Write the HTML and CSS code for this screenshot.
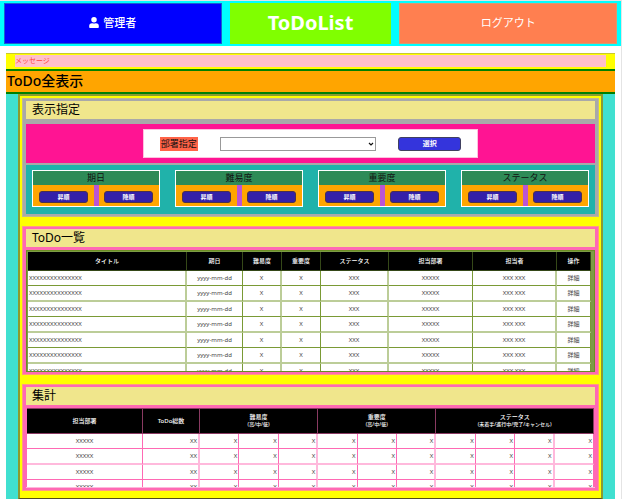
FILE: index.html
```html
<!DOCTYPE html>
<html lang="ja">
<head>
<meta charset="utf-8">
<title>ToDoList</title>
<link rel="stylesheet" href="styles.css">
</head>
<body>
<header class="top">
  <div class="top-cell user">
    <svg class="user-icon" viewBox="0 0 448 512" aria-hidden="true"><path d="M224 256a128 128 0 1 0 0-256 128 128 0 0 0 0 256zm90 32h-17a174 174 0 0 1-146 0h-17A134 134 0 0 0 0 422v42c0 27 21 48 48 48h352c27 0 48-21 48-48v-42a134 134 0 0 0-134-134z"/></svg>
    <span>管理者</span>
  </div>
  <h1 class="top-cell brand">ToDoList</h1>
  <a class="top-cell logout" href="#">ログアウト</a>
</header>
<main class="page">
  <div class="message"><p>メッセージ</p></div>
  <h2 class="page-title">ToDo全表示</h2>
  <div class="body">
    <div class="column">
      <section class="panel filter">
        <h3 class="panel-title">表示指定</h3>
        <div class="dept">
          <form class="dept-form">
            <label for="dept">部署指定</label>
            <div class="select">
              <select id="dept"><option></option></select>
              <svg viewBox="0 0 6 4" aria-hidden="true"><path d="M1 1l2 2 2-2"/></svg>
            </div>
            <button type="button" class="pick">選択</button>
          </form>
        </div>
        <div class="sorts">
          <div class="sort"><h4>期日</h4><div class="sort-buttons"><button type="button">昇順</button><i></i><button type="button">降順</button></div></div>
          <div class="sort"><h4>難易度</h4><div class="sort-buttons"><button type="button">昇順</button><i></i><button type="button">降順</button></div></div>
          <div class="sort"><h4>重要度</h4><div class="sort-buttons"><button type="button">昇順</button><i></i><button type="button">降順</button></div></div>
          <div class="sort"><h4>ステータス</h4><div class="sort-buttons"><button type="button">昇順</button><i></i><button type="button">降順</button></div></div>
        </div>
      </section>

      <section class="panel list">
        <h3 class="panel-title">ToDo一覧</h3>
        <div class="scroll list-scroll">
          <table>
            <colgroup><col><col class="c-date"><col class="c-level"><col class="c-level"><col class="c-status"><col class="c-dept"><col class="c-dept"><col class="c-action"></colgroup>
            <thead><tr><th>タイトル</th><th>期日</th><th>難易度</th><th>重要度</th><th>ステータス</th><th>担当部署</th><th>担当者</th><th>操作</th></tr></thead>
            <tbody>
              <tr><td>XXXXXXXXXXXXXXX</td><td>yyyy-mm-dd</td><td>X</td><td>X</td><td>XXX</td><td>XXXXX</td><td>XXX XXX</td><td><a href="#">詳細</a></td></tr>
              <tr><td>XXXXXXXXXXXXXXX</td><td>yyyy-mm-dd</td><td>X</td><td>X</td><td>XXX</td><td>XXXXX</td><td>XXX XXX</td><td><a href="#">詳細</a></td></tr>
              <tr><td>XXXXXXXXXXXXXXX</td><td>yyyy-mm-dd</td><td>X</td><td>X</td><td>XXX</td><td>XXXXX</td><td>XXX XXX</td><td><a href="#">詳細</a></td></tr>
              <tr><td>XXXXXXXXXXXXXXX</td><td>yyyy-mm-dd</td><td>X</td><td>X</td><td>XXX</td><td>XXXXX</td><td>XXX XXX</td><td><a href="#">詳細</a></td></tr>
              <tr><td>XXXXXXXXXXXXXXX</td><td>yyyy-mm-dd</td><td>X</td><td>X</td><td>XXX</td><td>XXXXX</td><td>XXX XXX</td><td><a href="#">詳細</a></td></tr>
              <tr><td>XXXXXXXXXXXXXXX</td><td>yyyy-mm-dd</td><td>X</td><td>X</td><td>XXX</td><td>XXXXX</td><td>XXX XXX</td><td><a href="#">詳細</a></td></tr>
              <tr><td>XXXXXXXXXXXXXXX</td><td>yyyy-mm-dd</td><td>X</td><td>X</td><td>XXX</td><td>XXXXX</td><td>XXX XXX</td><td><a href="#">詳細</a></td></tr>
            </tbody>
          </table>
        </div>
      </section>

      <section class="panel total">
        <h3 class="panel-title">集計</h3>
        <div class="scroll total-scroll">
          <table>
            <colgroup><col class="t-dept"><col class="t-count"><col span="10"></colgroup>
            <thead><tr><th>担当部署</th><th>ToDo総数</th><th colspan="3">難易度<br><small>(高/中/低)</small></th><th colspan="3">重要度<br><small>(高/中/低)</small></th><th colspan="4">ステータス<br><small>(未着手/進行中/完了/キャンセル)</small></th></tr></thead>
            <tbody>
              <tr><td>XXXXX</td><td>XX</td><td>X</td><td>X</td><td>X</td><td>X</td><td>X</td><td>X</td><td>X</td><td>X</td><td>X</td><td>X</td></tr>
              <tr><td>XXXXX</td><td>XX</td><td>X</td><td>X</td><td>X</td><td>X</td><td>X</td><td>X</td><td>X</td><td>X</td><td>X</td><td>X</td></tr>
              <tr><td>XXXXX</td><td>XX</td><td>X</td><td>X</td><td>X</td><td>X</td><td>X</td><td>X</td><td>X</td><td>X</td><td>X</td><td>X</td></tr>
              <tr><td>XXXXX</td><td>XX</td><td>X</td><td>X</td><td>X</td><td>X</td><td>X</td><td>X</td><td>X</td><td>X</td><td>X</td><td>X</td></tr>
            </tbody>
          </table>
        </div>
      </section>
    </div>
  </div>
</main>
</body>
</html>
```
FILE: styles.css
```css
* { box-sizing: border-box; }
body {
  margin: 0;
  border-top: 1px solid #e4e4e4;
  border-right: 1px solid #e4e4e4;
  font-family: "Noto Sans", "Noto Sans CJK JP", sans-serif;
  color: #111;
  background: #fff;
  overflow: hidden;
}
h1, h2, h3, h4, p { margin: 0; font-weight: 400; }
a { color: inherit; text-decoration: none; }
button { font-family: inherit; padding: 0; color: #fff; cursor: pointer; }

.top {
  display: grid;
  grid-template-columns: 218fr 162fr 218fr;
  gap: 8px;
  padding: 2px 4px;
  background: #0ff;
}
.top-cell {
  display: flex;
  align-items: center;
  justify-content: center;
  gap: 4px;
  height: 41px;
  padding-bottom: 3px;
  font-size: 11px;
  color: #fff;
}
.user { background: #00f; border: 1px solid #1a5fd0; font-weight: 500; }
.user-icon { width: 10px; height: 11px; fill: #fff; }
.brand { background: #80ff00; font-size: 20px; font-weight: 700; }
.logout { background: #ff7f50; border: 1px solid #d99a70; }

.page { margin: 7px 6px 0; }
.message { padding: 1px 9px 2px; background: #ff0; border-top: 1px solid #c8c830; }
.message p { height: 12px; background: #ffc0cb; color: #ff4040; font-size: 7px; line-height: 12px; }
.page-title {
  height: 25px;
  padding-left: 1px;
  border: solid #008000;
  border-width: 2px 0;
  background: #ffa500;
  color: #000;
  font-size: 14px;
  font-weight: 500;
  line-height: 19px;
}
.body { padding: 0 12px; background: #40e0d0; }
.column {
  display: grid;
  gap: 9px;
  padding: 2px 2px 7px;
  border: 2px solid #8c9a30;
  border-bottom: 1px solid #504a20;
  background: #ff0;
}

.panel { padding: 2px 3px; border: 1px solid #ff9a80; background: #ff69b4; }
.panel-title { height: 18px; padding-left: 6px; background: #f0e68c; color: #000; font-size: 12px; line-height: 17px; }
.filter { border-color: #c0b890; background: #a9a9a9; }

.dept { display: flex; justify-content: center; margin-top: 5px; padding: 5px; background: #ff1493; }
.dept-form {
  display: flex;
  align-items: center;
  width: 60%;
  height: 29px;
  padding: 0 16px;
  border: 1px solid #ffc0e0;
  background: #fff;
}
.dept-form label { padding: 0 1px; background: #ff6347; font-size: 9px; line-height: 14px; }
.select { display: grid; flex: 1; margin: 0 22px; align-items: center; }
.select select {
  grid-area: 1 / 1;
  width: 100%;
  height: 14px;
  padding: 0 8px 0 2px;
  appearance: none;
  border: 1px solid #999;
  border-radius: 0;
  background: #fff;
  font-size: 8px;
}
.select svg { grid-area: 1 / 1; justify-self: end; width: 6px; height: 4px; margin-right: 2px; fill: none; stroke: #111; stroke-width: 1.2; pointer-events: none; }
.pick { width: 63px; height: 14px; border: 1px solid #404060; border-radius: 3px; background: #3434dc; font-size: 7px; line-height: 12px; font-weight: 700; }

.sorts { display: grid; grid-template-columns: repeat(4, 1fr); gap: 15px; margin-top: 2px; padding: 5px 6px 7px; background: #20b2aa; }
.sort { border: 1px solid #fff; background: #ffa500; }
.sort h4 { height: 14px; background: #2e8b57; font-size: 9px; line-height: 13px; text-align: center; }
.sort-buttons { display: flex; align-items: center; justify-content: space-between; height: 21px; padding: 2px 6px 0; }
.sort-buttons i { width: 5px; height: 21px; margin-top: -2px; background: #ba55d3; }
.sort button { width: 49px; height: 12px; border: 1px solid #4a3050; border-radius: 3px; background: #3420a8; font-size: 6px; line-height: 10px; font-weight: 700; }

.scroll { margin-top: 3px; overflow: hidden; }
.scroll table { width: 100%; table-layout: fixed; border-spacing: 0; background: #fff; }
.scroll th { padding: 0; background: #000; color: #fff; font-size: 6px; font-weight: 500; line-height: 7px; }
.scroll small { font-size: 5px; }
.scroll td { height: 15px; padding: 0 1px; color: #444; font-size: 6px; line-height: 12px; text-align: center; white-space: nowrap; }
.scroll tr:nth-child(even) td { height: 16px; }

.list-scroll { height: 122px; padding: 1px 3px 0 1px; border: 1px solid #6b8e23; background: #7d9c45; }
.list th { height: 19px; border: solid #354818; border-width: 0 1px 1px 0; }
.list td { border: solid #7a9a35; border-width: 0 1px 1px 0; }
.list tr:nth-child(even) td { border-bottom: 2px solid #bccd98; }
.list td:nth-child(2n+1) { border-right: 2px solid #bccd98; }
.list td:first-child { text-align: left; }
.c-date { width: 56px; }
.c-level { width: 39px; }
.c-status { width: 68px; }
.c-dept { width: 84px; }
.c-action { width: 34px; }

.total-scroll { height: 80px; padding: 0 1px; border-bottom: 1px solid #ffb6dc; }
.total th { height: 26px; border: solid #8a3a62; border-width: 1px 1px 1px 0; }
.total td { border: solid #ff69b4; border-width: 0 1px 1px 0; text-align: right; }
.total tr:nth-child(even) td { border-bottom: 2px solid #ffb9dc; }
.total td:nth-child(3n+2) { border-right: 2px solid #ffb9dc; }
.total td:first-child { text-align: center; }
.t-dept { width: 116px; }
.t-count { width: 57px; }
```
